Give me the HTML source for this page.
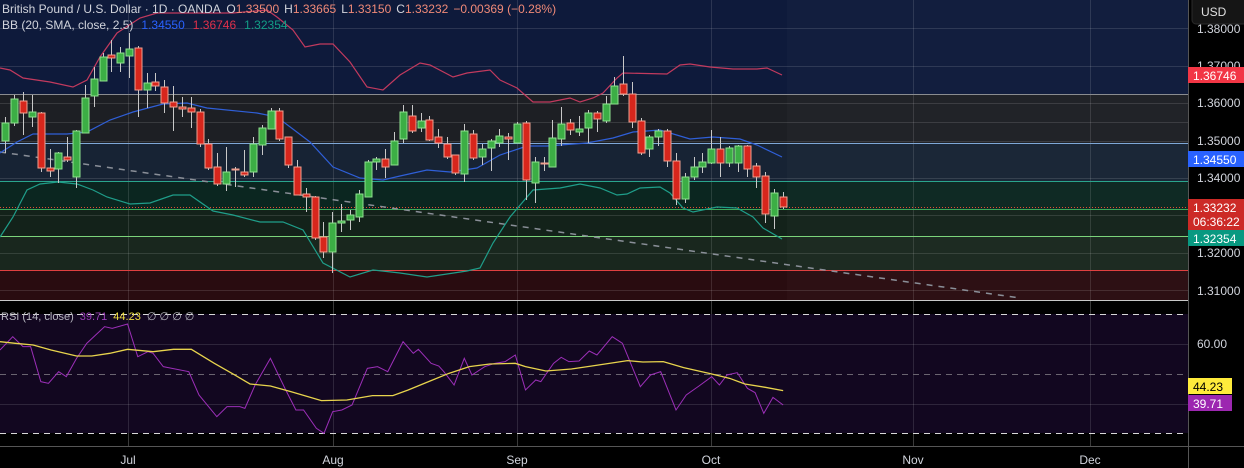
<!DOCTYPE html>
<html><head><meta charset="utf-8"><style>
html,body{margin:0;padding:0;background:#000;width:1244px;height:468px;overflow:hidden;font-family:"Liberation Sans",sans-serif}
svg{display:block}
</style></head><body>
<svg width="1244" height="468" xmlns="http://www.w3.org/2000/svg" font-family="Liberation Sans, sans-serif">
<rect width="1244" height="468" fill="#000"/>
<rect x="0" y="0" width="1188" height="94" fill="#0e1a3b"/>
<rect x="0" y="94" width="1188" height="49" fill="#1d1f24"/>
<rect x="0" y="143" width="1188" height="38" fill="#172334"/>
<rect x="0" y="181" width="1188" height="28" fill="#0b2620"/>
<rect x="0" y="209" width="1188" height="27" fill="#13221a"/>
<rect x="0" y="236" width="1188" height="34" fill="#19271e"/>
<rect x="0" y="270" width="1188" height="30" fill="#290c10"/>
<rect x="787" y="0" width="401" height="300" fill="rgba(255,255,255,0.02)"/>
<g stroke="rgba(255,255,255,0.12)" stroke-width="1">
<line x1="0" y1="28.5" x2="1188" y2="28.5"/><line x1="0" y1="66.5" x2="1188" y2="66.5"/><line x1="0" y1="103.5" x2="1188" y2="103.5"/><line x1="0" y1="122.5" x2="1188" y2="122.5"/><line x1="0" y1="141.5" x2="1188" y2="141.5"/><line x1="0" y1="178.5" x2="1188" y2="178.5"/><line x1="0" y1="215.5" x2="1188" y2="215.5"/><line x1="0" y1="253.5" x2="1188" y2="253.5"/><line x1="0" y1="290.5" x2="1188" y2="290.5"/>
<line x1="128.5" y1="0" x2="128.5" y2="446"/><line x1="333.5" y1="0" x2="333.5" y2="446"/><line x1="517.5" y1="0" x2="517.5" y2="446"/><line x1="711.5" y1="0" x2="711.5" y2="446"/><line x1="913.5" y1="0" x2="913.5" y2="446"/><line x1="1090.5" y1="0" x2="1090.5" y2="446"/>
</g>
<line x1="0" y1="94.5" x2="1188" y2="94.5" stroke="#8a8c90"/>
<line x1="0" y1="143.5" x2="1188" y2="143.5" stroke="#7fa8d8"/>
<line x1="0" y1="181.5" x2="1188" y2="181.5" stroke="#2aa58d"/>
<line x1="0" y1="209.5" x2="1188" y2="209.5" stroke="#3ea85a"/>
<line x1="0" y1="236.5" x2="1188" y2="236.5" stroke="#7bd47b"/>
<line x1="0" y1="270.5" x2="1188" y2="270.5" stroke="#e04040"/>
<line x1="0" y1="207.5" x2="1188" y2="207.5" stroke="#e05030" stroke-dasharray="1 2"/>
<line x1="0" y1="152" x2="1020" y2="298" stroke="#8a8f98" stroke-width="1.5" stroke-dasharray="6 6"/>
<polyline fill="none" stroke="#c23a5e" stroke-width="1.2" points="0,68 10,70 23,78 50,82 73,87 87,80 100,57 117,33 140,18 157,13 200,13 233,13 267,10 277,17 293,30 305,47 320,44 333,44 350,62 367,87 383,90 400,75 420,63 430,65 453,77 467,73 490,70 500,80 517,88 533,102 550,102 570,98 580,102 593,98 603,93 617,78 623,73 667,74 680,65 690,64 710,67 733,69 757,69 767,68 782,75"/>
<polyline fill="none" stroke="#2f5fd8" stroke-width="1.2" points="0,153 17,142 33,134 67,134 87,132 110,120 133,112 163,104 187,103 207,108 257,113 277,117 310,142 333,167 360,178 383,180 400,176 427,170 450,172 477,168 500,155 527,146 547,146 587,143 613,138 633,132 660,130 690,139 713,137 740,139 757,145 782,157"/>
<polyline fill="none" stroke="#1f9e8a" stroke-width="1.2" points="0,237 13,217 27,190 40,184 58,182 77,184 93,190 107,197 130,204 150,203 173,195 190,195 213,211 233,215 260,222 283,222 303,230 323,263 350,277 373,270 400,273 427,277 467,271 480,268 493,243 510,217 533,190 560,188 580,184 600,188 617,195 627,194 640,188 660,187 670,193 683,208 693,212 717,207 737,208 753,217 763,228 782,239"/>
<g stroke="#c8c8c8" stroke-width="1">
<line x1="5.5" y1="117" x2="5.5" y2="153"/><line x1="14.5" y1="95" x2="14.5" y2="126"/><line x1="23.5" y1="92" x2="23.5" y2="135"/><line x1="32.5" y1="95" x2="32.5" y2="127"/><line x1="41.5" y1="112" x2="41.5" y2="172"/><line x1="50.5" y1="149" x2="50.5" y2="177"/><line x1="58.5" y1="152" x2="58.5" y2="183"/><line x1="67.5" y1="137" x2="67.5" y2="162"/><line x1="76.5" y1="130" x2="76.5" y2="188"/><line x1="85.5" y1="85" x2="85.5" y2="133"/><line x1="94.5" y1="67" x2="94.5" y2="107"/><line x1="103.5" y1="53" x2="103.5" y2="81"/><line x1="111.5" y1="40" x2="111.5" y2="72"/><line x1="120.5" y1="47" x2="120.5" y2="72"/><line x1="129.5" y1="33" x2="129.5" y2="78"/><line x1="138.5" y1="46" x2="138.5" y2="117"/><line x1="147.5" y1="73" x2="147.5" y2="108"/><line x1="155.5" y1="73" x2="155.5" y2="91"/><line x1="164.5" y1="80" x2="164.5" y2="113"/><line x1="173.5" y1="86" x2="173.5" y2="131"/><line x1="182.5" y1="97" x2="182.5" y2="117"/><line x1="191.5" y1="97" x2="191.5" y2="128"/><line x1="200.5" y1="109" x2="200.5" y2="147"/><line x1="208.5" y1="139" x2="208.5" y2="170"/><line x1="217.5" y1="153" x2="217.5" y2="186"/><line x1="226.5" y1="147" x2="226.5" y2="191"/><line x1="235.5" y1="167" x2="235.5" y2="187"/><line x1="244.5" y1="150" x2="244.5" y2="177"/><line x1="253.5" y1="137" x2="253.5" y2="177"/><line x1="262.5" y1="125" x2="262.5" y2="155"/><line x1="271.5" y1="108" x2="271.5" y2="129"/><line x1="279.5" y1="108" x2="279.5" y2="141"/><line x1="288.5" y1="137" x2="288.5" y2="168"/><line x1="297.5" y1="160" x2="297.5" y2="195"/><line x1="306.5" y1="188" x2="306.5" y2="212"/><line x1="315.5" y1="196" x2="315.5" y2="240"/><line x1="323.5" y1="222" x2="323.5" y2="258"/><line x1="332.5" y1="212" x2="332.5" y2="273"/><line x1="341.5" y1="204" x2="341.5" y2="232"/><line x1="350.5" y1="210" x2="350.5" y2="230"/><line x1="359.5" y1="190" x2="359.5" y2="222"/><line x1="368.5" y1="160" x2="368.5" y2="197"/><line x1="376.5" y1="157" x2="376.5" y2="170"/><line x1="385.5" y1="149" x2="385.5" y2="178"/><line x1="394.5" y1="132" x2="394.5" y2="165"/><line x1="403.5" y1="105" x2="403.5" y2="143"/><line x1="412.5" y1="105" x2="412.5" y2="133"/><line x1="421.5" y1="113" x2="421.5" y2="132"/><line x1="429.5" y1="116" x2="429.5" y2="141"/><line x1="438.5" y1="129" x2="438.5" y2="148"/><line x1="447.5" y1="137" x2="447.5" y2="159"/><line x1="455.5" y1="155" x2="455.5" y2="175"/><line x1="464.5" y1="124" x2="464.5" y2="182"/><line x1="473.5" y1="130" x2="473.5" y2="160"/><line x1="482.5" y1="144" x2="482.5" y2="165"/><line x1="491.5" y1="139" x2="491.5" y2="171"/><line x1="499.5" y1="129" x2="499.5" y2="147"/><line x1="508.5" y1="133" x2="508.5" y2="160"/><line x1="517.5" y1="122" x2="517.5" y2="143"/><line x1="526.5" y1="121" x2="526.5" y2="200"/><line x1="535.5" y1="157" x2="535.5" y2="203"/><line x1="544.5" y1="157" x2="544.5" y2="171"/><line x1="552.5" y1="120" x2="552.5" y2="167"/><line x1="561.5" y1="107" x2="561.5" y2="146"/><line x1="570.5" y1="119" x2="570.5" y2="135"/><line x1="579.5" y1="116" x2="579.5" y2="136"/><line x1="588.5" y1="110" x2="588.5" y2="143"/><line x1="597.5" y1="111" x2="597.5" y2="132"/><line x1="606.5" y1="96" x2="606.5" y2="123"/><line x1="614.5" y1="77" x2="614.5" y2="104"/><line x1="623.5" y1="56" x2="623.5" y2="96"/><line x1="632.5" y1="82" x2="632.5" y2="128"/><line x1="641.5" y1="118" x2="641.5" y2="155"/><line x1="649.5" y1="135" x2="649.5" y2="157"/><line x1="658.5" y1="129" x2="658.5" y2="146"/><line x1="667.5" y1="129" x2="667.5" y2="167"/><line x1="676.5" y1="153" x2="676.5" y2="205"/><line x1="685.5" y1="173" x2="685.5" y2="203"/><line x1="694.5" y1="157" x2="694.5" y2="180"/><line x1="702.5" y1="153" x2="702.5" y2="173"/><line x1="711.5" y1="130" x2="711.5" y2="164"/><line x1="720.5" y1="137" x2="720.5" y2="177"/><line x1="729.5" y1="146" x2="729.5" y2="167"/><line x1="738.5" y1="145" x2="738.5" y2="172"/><line x1="747.5" y1="145" x2="747.5" y2="177"/><line x1="756.5" y1="163" x2="756.5" y2="188"/><line x1="765.5" y1="172" x2="765.5" y2="223"/><line x1="774.5" y1="189" x2="774.5" y2="229"/><line x1="783.5" y1="192" x2="783.5" y2="209"/>
</g>
<g fill="#3cae45" stroke="#8ee08e" stroke-width="1">
<rect x="2" y="123" width="7" height="18"/><rect x="11" y="99" width="7" height="24"/><rect x="29" y="112" width="7" height="5"/><rect x="55" y="153" width="7" height="16"/><rect x="73" y="131" width="7" height="46"/><rect x="82" y="98" width="7" height="35"/><rect x="91" y="79" width="7" height="17"/><rect x="100" y="57" width="7" height="24"/><rect x="117" y="53" width="7" height="10"/><rect x="126" y="49" width="7" height="7"/><rect x="144" y="83" width="7" height="7"/><rect x="223" y="172" width="7" height="12"/><rect x="250" y="144" width="7" height="28"/><rect x="259" y="128" width="7" height="17"/><rect x="268" y="111" width="7" height="18"/><rect x="329" y="223" width="7" height="29"/><rect x="338" y="221" width="7" height="2"/><rect x="347" y="215" width="7" height="5"/><rect x="356" y="194" width="7" height="23"/><rect x="365" y="162" width="7" height="35"/><rect x="373" y="159" width="7" height="3"/><rect x="391" y="141" width="7" height="24"/><rect x="400" y="112" width="7" height="27"/><rect x="418" y="121" width="7" height="7"/><rect x="461" y="131" width="7" height="43"/><rect x="479" y="149" width="7" height="8"/><rect x="488" y="141" width="7" height="7"/><rect x="496" y="136" width="7" height="7"/><rect x="514" y="124" width="7" height="19"/><rect x="532" y="162" width="7" height="21"/><rect x="549" y="138" width="7" height="29"/><rect x="558" y="124" width="7" height="15"/><rect x="576" y="129" width="7" height="3"/><rect x="585" y="113" width="7" height="15"/><rect x="603" y="104" width="7" height="17"/><rect x="611" y="86" width="7" height="18"/><rect x="646" y="137" width="7" height="12"/><rect x="655" y="131" width="7" height="6"/><rect x="682" y="177" width="7" height="22"/><rect x="691" y="167" width="7" height="10"/><rect x="699" y="162" width="7" height="5"/><rect x="708" y="149" width="7" height="14"/><rect x="726" y="148" width="7" height="15"/><rect x="735" y="146" width="7" height="17"/><rect x="771" y="193" width="7" height="23"/>
</g>
<g fill="#d7261c" stroke="#f0a090" stroke-width="1">
<rect x="20" y="101" width="7" height="12"/><rect x="38" y="113" width="7" height="55"/><rect x="47" y="168" width="7" height="3"/><rect x="64" y="157" width="7" height="3"/><rect x="108" y="55" width="7" height="3"/><rect x="135" y="48" width="7" height="42"/><rect x="152" y="82" width="7" height="4"/><rect x="161" y="87" width="7" height="16"/><rect x="170" y="102" width="7" height="5"/><rect x="179" y="107" width="7" height="2"/><rect x="188" y="108" width="7" height="4"/><rect x="197" y="112" width="7" height="32"/><rect x="205" y="144" width="7" height="24"/><rect x="214" y="167" width="7" height="17"/><rect x="232" y="169" width="7" height="1"/><rect x="241" y="172" width="7" height="3"/><rect x="276" y="111" width="7" height="28"/><rect x="285" y="137" width="7" height="28"/><rect x="294" y="167" width="7" height="28"/><rect x="303" y="194" width="7" height="3"/><rect x="312" y="197" width="7" height="41"/><rect x="320" y="237" width="7" height="15"/><rect x="382" y="159" width="7" height="8"/><rect x="409" y="116" width="7" height="15"/><rect x="426" y="120" width="7" height="20"/><rect x="435" y="137" width="7" height="6"/><rect x="444" y="144" width="7" height="13"/><rect x="452" y="155" width="7" height="18"/><rect x="470" y="134" width="7" height="24"/><rect x="505" y="137" width="7" height="2"/><rect x="523" y="123" width="7" height="57"/><rect x="541" y="163" width="7" height="1"/><rect x="567" y="123" width="7" height="7"/><rect x="594" y="113" width="7" height="6"/><rect x="620" y="84" width="7" height="10"/><rect x="629" y="94" width="7" height="28"/><rect x="638" y="121" width="7" height="32"/><rect x="664" y="131" width="7" height="30"/><rect x="673" y="161" width="7" height="38"/><rect x="717" y="149" width="7" height="14"/><rect x="744" y="146" width="7" height="23"/><rect x="753" y="166" width="7" height="11"/><rect x="762" y="176" width="7" height="38"/><rect x="780" y="197" width="7" height="10"/>
</g>
<g font-size="12" fill="#d1d4dc">
<text x="2" y="13">British Pound / U.S. Dollar · 1D · OANDA <tspan dx="3">O</tspan><tspan fill="#f08a78">1.33500</tspan><tspan dx="5">H</tspan><tspan fill="#f08a78">1.33665</tspan><tspan dx="5">L</tspan><tspan fill="#f08a78">1.33150</tspan><tspan dx="5">C</tspan><tspan fill="#f08a78">1.33232</tspan><tspan dx="5" fill="#f08a78">−0.00369 (−0.28%)</tspan></text>
<text x="2" y="29">BB (20, SMA, close, 2.5)<tspan dx="8" fill="#2962ff">1.34550</tspan><tspan dx="8" fill="#e0304a">1.36746</tspan><tspan dx="8" fill="#129e86">1.32354</tspan></text>
</g>
<line x1="0" y1="300.5" x2="1244" y2="300.5" stroke="#c8c8c8"/>
<rect x="0" y="314" width="1188" height="119" fill="#120720"/>
<g stroke="rgba(255,255,255,0.12)">
<line x1="128.5" y1="301" x2="128.5" y2="446"/><line x1="333.5" y1="301" x2="333.5" y2="446"/><line x1="517.5" y1="301" x2="517.5" y2="446"/><line x1="711.5" y1="301" x2="711.5" y2="446"/><line x1="913.5" y1="301" x2="913.5" y2="446"/><line x1="1090.5" y1="301" x2="1090.5" y2="446"/>
<line x1="0" y1="344.5" x2="1188" y2="344.5"/><line x1="0" y1="404.5" x2="1188" y2="404.5"/>
</g>
<line x1="0" y1="314.5" x2="1188" y2="314.5" stroke="#d8d8d8" stroke-dasharray="6 5"/>
<line x1="0" y1="374.5" x2="1188" y2="374.5" stroke="#6a6470" stroke-dasharray="6 5"/>
<line x1="0" y1="433.5" x2="1188" y2="433.5" stroke="#d8d8d8" stroke-dasharray="6 5"/>
<g transform="translate(0,300) scale(0.5102,0.3333)" fill="none">
<polyline vector-effect="non-scaling-stroke" stroke="#9c2fb8" stroke-width="1" points="0,150 25,110 45,140 60,140 80,245 95,250 115,215 130,230 150,175 170,130 205,80 220,85 250,72 270,170 290,155 300,160 320,200 370,215 390,285 425,350 445,320 470,320 480,325 500,255 530,175 560,270 580,330 595,330 620,385 635,400 652,335 670,330 690,315 720,205 740,200 760,215 790,125 810,160 820,148 845,190 860,198 870,215 890,255 910,175 925,225 950,200 970,190 990,185 1010,165 1030,270 1050,240 1060,245 1085,190 1100,172 1115,185 1135,183 1155,153 1170,165 1200,110 1220,130 1255,260 1275,225 1295,215 1325,330 1345,285 1370,258 1395,230 1410,255 1425,225 1445,218 1465,265 1480,278 1497,340 1515,292 1535,315"/>
<polyline vector-effect="non-scaling-stroke" stroke="#e8d44d" stroke-width="1.3" points="0,125 30,130 65,135 100,150 150,168 180,168 215,160 250,148 300,155 340,148 375,148 420,190 460,225 490,252 530,258 570,275 630,302 680,300 730,287 770,287 800,270 840,245 880,220 920,200 960,192 1010,190 1030,200 1070,213 1120,207 1160,198 1230,182 1260,186 1300,185 1340,203 1390,220 1430,235 1460,252 1500,262 1535,272"/>
</g>
<g font-size="11">
<text x="1" y="320" fill="#b8b8c0">RSI (14, close)<tspan dx="6" fill="#9c3fb8">39.71</tspan><tspan dx="6" fill="#f0e040">44.23</tspan><tspan dx="6" fill="#b8b8c0">∅ ∅ ∅ ∅</tspan></text>
</g>
<rect x="1189" y="0" width="55" height="468" fill="#000"/>
<line x1="1188.5" y1="0" x2="1188.5" y2="468" stroke="#555"/>
<line x1="0" y1="446.5" x2="1244" y2="446.5" stroke="#555"/>
<g font-size="12" fill="#d1d4dc">
<text x="1197" y="33">1.38000</text>
<text x="1197" y="70">1.37000</text>
<text x="1197" y="107">1.36000</text>
<text x="1197" y="145">1.35000</text>
<text x="1197" y="182">1.34000</text>
<text x="1197" y="257">1.32000</text>
<text x="1197" y="295">1.31000</text>
<text x="1197" y="348">60.00</text>
</g>
<rect x="1192" y="-4" width="56" height="28" rx="4" fill="#151515" stroke="#2a2a2a"/>
<text x="1201" y="16" font-size="12" fill="#e0e0e0">USD</text>
<rect x="1188" y="67" width="56" height="16" fill="#f23645"/><text x="1193" y="80" font-size="12" fill="#fff">1.36746</text>
<rect x="1188" y="151" width="56" height="16" fill="#2962ff"/><text x="1193" y="164" font-size="12" fill="#fff">1.34550</text>
<rect x="1188" y="199" width="56" height="31" fill="#cc2a26"/><text x="1193" y="212" font-size="12" fill="#fff">1.33232</text><text x="1193" y="226" font-size="12" fill="#fff">06:36:22</text>
<rect x="1188" y="230" width="56" height="16" fill="#089981"/><text x="1193" y="243" font-size="12" fill="#fff">1.32354</text>
<rect x="1188" y="378" width="44" height="16" fill="#ffeb3b"/><text x="1193" y="391" font-size="12" fill="#000">44.23</text>
<rect x="1188" y="395" width="44" height="16" fill="#9c27b0"/><text x="1193" y="408" font-size="12" fill="#fff">39.71</text>
<g font-size="12" fill="#d1d4dc" text-anchor="middle">
<text x="128" y="464">Jul</text><text x="333" y="464">Aug</text><text x="517" y="464">Sep</text><text x="711" y="464">Oct</text><text x="913" y="464">Nov</text><text x="1090" y="464">Dec</text>
</g>
</svg>
</body></html>
